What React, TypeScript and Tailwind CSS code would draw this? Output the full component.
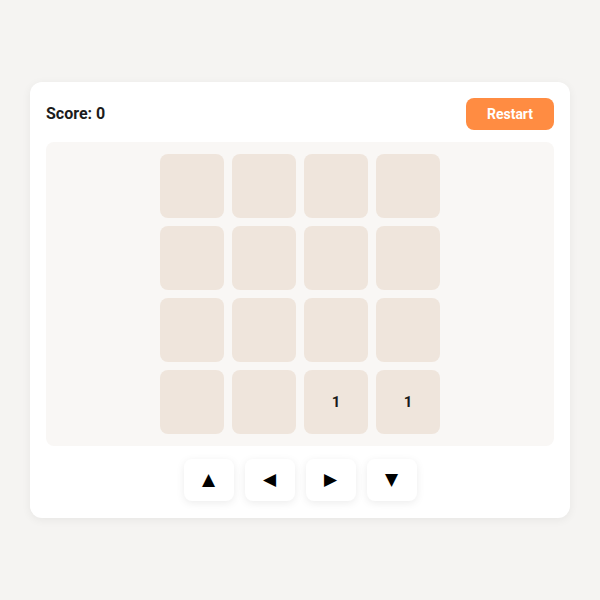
import { useState } from "react";

type Dir = "up" | "left" | "right" | "down";

const start = [
  [0, 0, 0, 0],
  [0, 0, 0, 0],
  [0, 0, 0, 0],
  [0, 0, 1, 1],
];

export default function App() {
  const [grid] = useState(start);
  const [score] = useState(0);

  const moves: { dir: Dir; glyph: string }[] = [
    { dir: "up", glyph: "▲" },
    { dir: "left", glyph: "◀" },
    { dir: "right", glyph: "▶" },
    { dir: "down", glyph: "▼" },
  ];

  return (
    <div
      className="min-h-screen w-full bg-[#f5f4f2] flex items-center justify-center"
      style={{ fontFamily: "Roboto, 'Liberation Sans', sans-serif" }}
    >
      <div className="w-[540px] bg-white rounded-xl shadow-[0_2px_10px_rgba(0,0,0,0.06)] p-4 flex flex-col gap-3">
        <div className="flex items-center justify-between">
          <span className="text-[16px] font-bold text-[#1c1c1c]">Score: {score}</span>
          <button className="w-[88px] h-8 rounded-lg bg-[#ff8c42] text-white text-[14px] font-bold">
            Restart
          </button>
        </div>

        <div className="bg-[#f9f7f5] rounded-lg py-3 flex justify-center">
          <div className="grid grid-cols-4 gap-2">
            {grid.flat().map((v, i) => (
              <div
                key={i}
                className="w-16 h-16 rounded-lg bg-[#efe5dc] flex items-center justify-center text-[15px] font-bold text-[#1a1a1a]"
              >
                {v > 0 ? v : ""}
              </div>
            ))}
          </div>
        </div>

        <div className="flex justify-center gap-[11px] pb-[1px] mt-[1px]">
          {moves.map((m) => (
            <button
              key={m.dir}
              className="w-[50px] h-[42px] rounded-lg bg-white shadow-[0_2px_8px_rgba(0,0,0,0.08)] flex items-center justify-center text-[17px] text-black"
              style={{ fontFamily: "'DejaVu Sans', sans-serif" }}
            >
              {m.glyph}
            </button>
          ))}
        </div>
      </div>
    </div>
  );
}
